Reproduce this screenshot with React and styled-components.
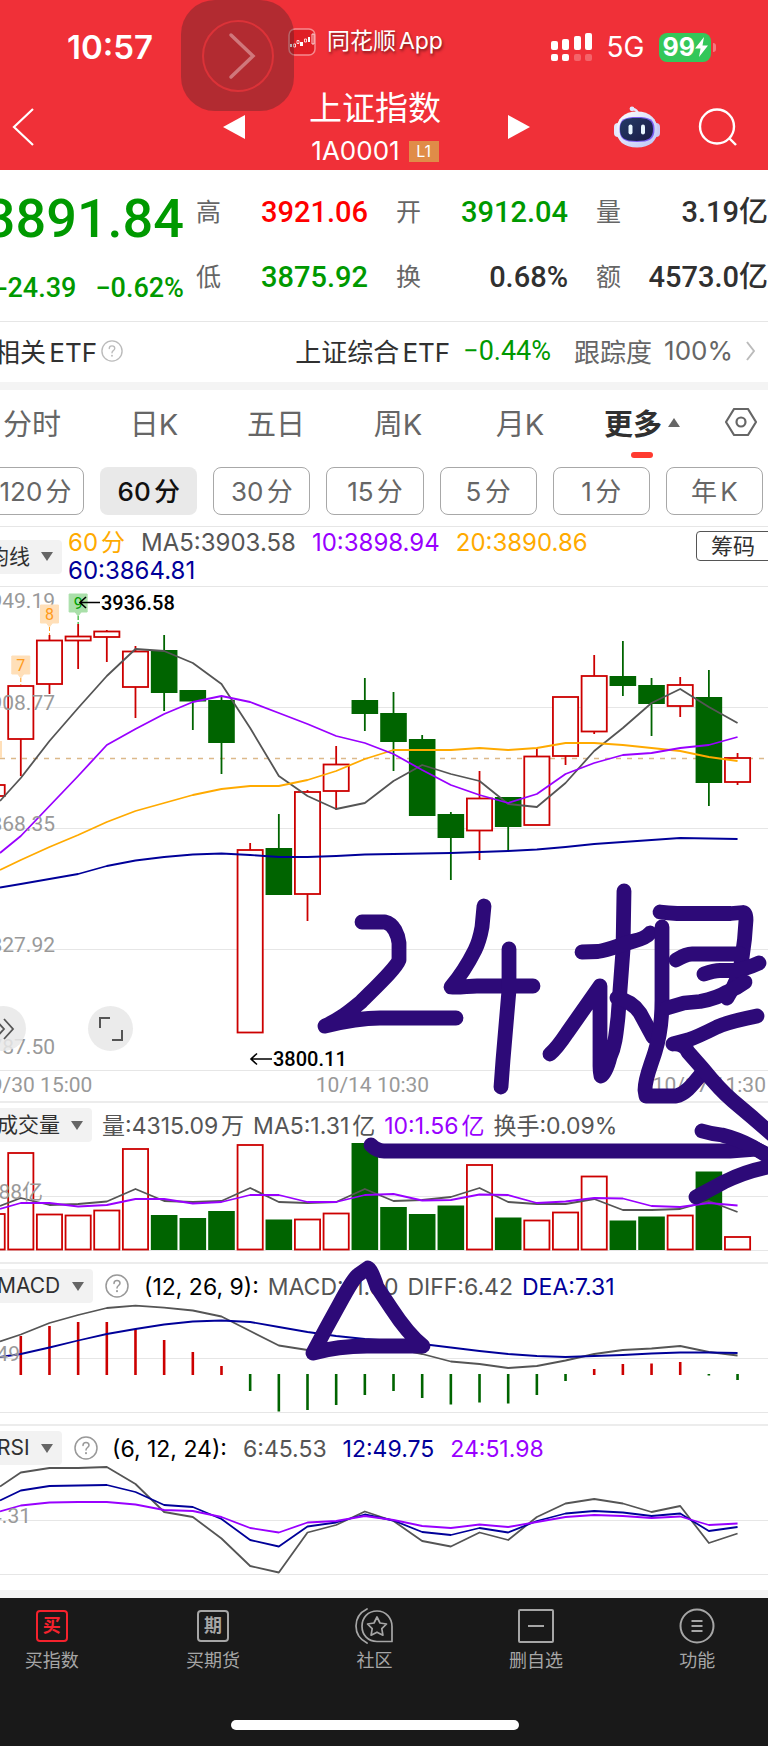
import React from "react";
import styled, { createGlobalStyle } from "styled-components";

const UI = `Inter, "Noto Sans CJK SC", sans-serif`;
const NUM = `Roboto, "Noto Sans CJK SC", sans-serif`;

const C = {
  red: "#f03038",
  up: "#cc0000",
  down: "#006400",
  fall: "#009900",
  rise: "#ff0000",
  ink: "#303030",
  mute: "#666666",
  axis: "#999999",
  line: "#e6e6e6",
  ma5: "#555555",
  ma10: "#9900ff",
  ma20: "#ffaa00",
  ma60: "#000099",
  pen: "#2d0a78",
};

const Global = createGlobalStyle`
  *, *::before, *::after { box-sizing: border-box; }
  body { margin: 0; background: #fff; font-family: ${UI}; color: ${C.ink}; text-autospace: normal; }
  button, select { font: inherit; color: inherit; background: none; border: 0; padding: 0; margin: 0; cursor: pointer; }
  button { display: inline-flex; align-items: center; justify-content: center; }
  a { color: inherit; text-decoration: none; }
  svg { display: block; flex: none; }
`;

const Page = styled.div`
  position: relative;
  overflow: hidden;
  white-space: nowrap;
`;

/* ---------- header ---------- */
const Header = styled.header`
  background: ${C.red};
  color: #fff;
`;
const StatusBar = styled.div`
  display: flex;
  align-items: center;
  height: 82px;
  padding: 12px 52px 0 67px;
`;
const Clock = styled.span`
  width: 221px;
  font-size: 33px;
  font-weight: 600;
`;
const SourceApp = styled.span`
  display: flex;
  align-items: center;
  gap: 11px;
  padding-bottom: 10px;
  font-size: 23px;
  line-height: 28px;
  text-shadow: 1px 2px 3px rgba(0, 0, 0, 0.5);
`;
const SourceName = styled.span`
  padding-bottom: 2px;
`;
const Signals = styled.span`
  display: flex;
  align-items: center;
  gap: 14px;
  margin-left: auto;
  font-size: 28px;
`;
const Battery = styled.span`
  display: flex;
  align-items: center;
  gap: 2px;
`;
const BatteryLevel = styled.span`
  display: flex;
  align-items: center;
  height: 29px;
  padding: 0 3px 0 4px;
  border-radius: 8px;
  background: #34c759;
  font-size: 25px;
  font-weight: 700;
`;
const BatteryTip = styled.i`
  width: 3px;
  height: 9px;
  border-radius: 0 3px 3px 0;
  background: rgba(255, 255, 255, 0.35);
`;
const TouchPad = styled.button`
  position: absolute;
  top: 0;
  left: 181px;
  width: 113px;
  height: 111px;
  border-radius: 34px;
  background: rgba(60, 35, 38, 0.34);
`;
const NavBar = styled.nav`
  display: grid;
  grid-template-columns: 1fr auto 1fr;
  align-items: center;
  height: 88px;
  padding-right: 18px;
`;
const NavLeft = styled.div`
  display: flex;
  align-items: center;
  justify-content: space-between;
  padding: 2px 64px 0 12px;
`;
const NavRight = styled.div`
  display: flex;
  align-items: center;
  padding: 2px 13px 0 67px;
  gap: 38px;
`;
const Robot = styled.button`
  margin-left: auto;
`;
const Title = styled.h1`
  margin: 0;
  font-size: 33px;
  line-height: 50px;
  font-weight: 400;
`;
const Code = styled.div`
  display: flex;
  align-items: center;
  justify-content: center;
  gap: 9px;
  font-size: 26px;
  line-height: 36px;
`;
const Level = styled.span`
  width: 30px;
  height: 21px;
  background: #e08c48;
  font-size: 16px;
  line-height: 21px;
  text-align: center;
`;

/* ---------- quote ---------- */
const Quote = styled.section`
  display: flex;
  height: 152px;
  border-bottom: 1px solid ${C.line};
  text-autospace: no-autospace;
`;
const PriceBlock = styled.div`
  width: 184px;
  display: flex;
  flex-direction: column;
  align-items: flex-end;
  padding-top: 16px;
  color: ${C.fall};
  font-family: ${NUM};
  font-weight: 500;
`;
const Price = styled.strong`
  font-size: 54px;
  line-height: 66px;
  font-weight: 500;
`;
const Change = styled.div`
  display: flex;
  gap: 19px;
  padding-top: 18px;
  font-size: 27px;
  line-height: 36px;
`;
const Stats = styled.dl`
  flex: 1;
  display: grid;
  grid-template-columns: repeat(3, 1fr);
  grid-auto-rows: 65px;
  column-gap: 28px;
  margin: 0;
  padding: 9px 0 0 12px;
`;
const Stat = styled.div`
  display: flex;
  align-items: center;
  justify-content: space-between;
  dt { padding-bottom: 3px; font-size: 25px; color: ${C.mute}; }
  dd {
    margin: 0;
    font-family: ${NUM};
    font-size: 29px;
    line-height: 36px;
    font-weight: 500;
    color: ${(p) => p.$color || C.ink};
  }
`;
const EtfRow = styled.div`
  display: flex;
  align-items: center;
  height: 60px;
  margin-left: -6px;
  padding: 0 13px 3px 0;
  font-size: 26px;
`;
const HelpButton = styled.button`
  margin-left: ${(p) => p.$gap || 0}px;
`;
const EtfLink = styled.a`
  display: flex;
  align-items: center;
  margin-left: auto;
  gap: 13px;
`;
const EtfChange = styled.span`
  color: ${C.fall};
  font-family: ${NUM};
  font-size: 27px;
`;
const Tracking = styled.span`
  display: flex;
  align-items: center;
  gap: 12px;
  padding-left: 10px;
  color: ${C.mute};
`;
const Band = styled.div`
  height: 8px;
  background: #f4f4f4;
`;

/* ---------- period selection ---------- */
const Tabs = styled.div`
  display: grid;
  grid-template-columns: repeat(6, 1fr) 76px;
  align-items: center;
  height: 68px;
  margin: 0 -11px 0 -29px;
  text-autospace: no-autospace;
`;
const Tab = styled.button`
  position: relative;
  gap: 6px;
  height: 68px;
  padding-bottom: 4px;
  font-size: 29px;
  font-weight: ${(p) => (p.$on ? 700 : 400)};
  color: ${(p) => (p.$on ? C.ink : C.mute)};
  &::after {
    content: "";
    display: ${(p) => (p.$on ? "block" : "none")};
    position: absolute;
    bottom: 0;
    left: 50%;
    width: 22px;
    height: 6px;
    margin-left: -11px;
    border-radius: 3px;
    background: #ff3b30;
  }
`;
const Periods = styled.div`
  display: grid;
  grid-template-columns: repeat(7, 1fr);
  gap: 16px;
  height: 68px;
  margin-left: -13px;
  padding: 9px 5px 11px 0;
`;
const Period = styled.button`
  padding-bottom: 4px;
  border: ${(p) => (p.$on ? 0 : 1)}px solid #a8a8a8;
  border-radius: 8px;
  background: ${(p) => (p.$on ? "#e9e9e9" : "#fff")};
  color: ${(p) => (p.$on ? "#111" : C.mute)};
  font-size: 26px;
  font-weight: ${(p) => (p.$on ? 500 : 400)};
`;
const Legend = styled.div`
  display: flex;
  align-items: center;
  height: 60px;
  border-top: 1px solid ${C.line};
`;
const LegendValues = styled.div`
  flex: 1;
  display: flex;
  flex-wrap: wrap;
  column-gap: 16px;
  padding-left: 6px;
  font-size: 24px;
  line-height: 28px;
`;
const Value = styled.span`
  color: ${(p) => p.$color};
`;
const ChipsButton = styled.button`
  align-self: flex-start;
  width: 78px;
  height: 30px;
  margin: 4px -6px 0 0;
  padding: 0 4px 4px 0;
  border: 1px solid #555;
  border-radius: 4px;
  font-size: 22px;
`;
const Pill = styled.label`
  display: inline-flex;
  align-items: center;
  gap: 11px;
  height: 34px;
  margin-left: ${(p) => p.$left}px;
  padding: 0 9px 0 5px;
  border-radius: 4px;
  background: #f2f2f2;
`;
const PillSelect = styled.select`
  appearance: none;
  outline: none;
  height: 34px;
  font-size: 21px;
`;

/* ---------- charts ---------- */
const Charts = styled.main`
  position: relative;
`;
const Plot = styled.svg`
  width: 100%;
  height: auto;
  font-family: ${NUM};
  font-size: 21px;
  text-autospace: no-autospace;
`;
const PlotBox = styled.div`
  position: relative;
`;
const RoundButton = styled.button`
  position: absolute;
  bottom: 19px;
  left: ${(p) => p.$left}px;
  width: 45px;
  height: 45px;
  border-radius: 50%;
  background: rgba(232, 232, 232, 0.85);
`;
const TimeAxis = styled.div`
  display: flex;
  justify-content: space-between;
  height: 31px;
  margin-left: -21px;
  padding-right: 2px;
  border-top: 1px solid ${C.line};
  font-family: ${NUM};
  font-size: 21px;
  line-height: 28px;
  color: ${C.axis};
`;
const PanelHead = styled.div`
  display: flex;
  align-items: center;
  height: 42px;
  padding-top: 4px;
  border-top: 2px solid #ececec;
  font-size: 23px;
  line-height: 28px;
`;
const PanelValues = styled.div`
  display: flex;
  gap: ${(p) => p.$gap}px;
  padding-left: ${(p) => p.$pad}px;
  padding-top: 2px;
`;
const Ink = styled.svg`
  position: absolute;
  top: 0;
  left: 0;
  width: 100%;
  height: auto;
  pointer-events: none;
`;

/* ---------- bottom bar ---------- */
const Footer = styled.footer`
  background: #191919;
  color: #a6a6a6;
  height: 148px;
`;
const TabBar = styled.nav`
  display: grid;
  grid-template-columns: repeat(5, 1fr);
  margin: 0 -10px 0 -29px;
  padding-top: 10px;
`;
const TabItem = styled.a`
  display: flex;
  flex-direction: column;
  align-items: center;
  gap: 3px;
  font-size: 18px;
  line-height: 28px;
`;
const GlyphBox = styled.span`
  display: flex;
  align-items: center;
  justify-content: center;
  width: 32px;
  height: 32px;
  margin: 2px 0;
  border: 2px solid;
  border-radius: 4px;
  font-size: 18px;
  font-weight: 700;
  color: ${(p) => p.$color || "inherit"};
`;
const HomeBar = styled.div`
  width: 288px;
  height: 10px;
  margin: 45px auto 0;
  border-radius: 5px;
  background: #fff;
  transform: translateX(-9px);
`;

/* ---------- data ---------- */
const X0 = 20.8;
const STEP = 28.67;
const cx = (i) => X0 + STEP * i;

// [index, direction, high, top, bottom, low]
const candles = [
  [-1, 1, 785, 785, 796, 796], [0, 1, 686, 686, 739, 776], [1, 1, 635, 640.5, 684, 694],
  [2, 1, 624, 636.5, 640.5, 669], [3, 1, 630, 631.5, 637, 662], [4, 1, 646, 651.5, 687, 718],
  [5, 0, 635, 650, 693, 711], [6, 0, 690, 690, 701.5, 730], [7, 0, 697, 700, 743, 774],
  [8, 1, 843, 850, 1032.5, 1032], [9, 0, 814, 848, 895, 895], [10, 1, 790, 792, 894, 921],
  [11, 1, 746, 764.5, 791, 810], [12, 0, 678, 700, 714, 731], [13, 0, 692, 713, 742, 771],
  [14, 0, 735, 739, 816, 816], [15, 0, 812, 814, 838, 880], [16, 1, 771, 798.5, 830.5, 860],
  [17, 0, 797, 797, 827, 852], [18, 1, 748, 756.5, 825, 825], [19, 1, 697, 697, 756, 765],
  [20, 1, 655, 676, 731.5, 734], [21, 0, 641, 676, 686, 696], [22, 0, 678, 685, 704, 736],
  [23, 1, 677, 685, 706, 717], [24, 0, 670, 697, 783, 806], [25, 1, 753, 758, 782, 785],
];
const ma5 = [801, 778, 741, 708, 676, 649, 651, 663, 684, 728, 776, 796, 809, 803, 781, 765, 774, 781, 804, 807, 783, 751, 728, 703, 689, 707, 723];
const ma10 = [853, 836, 806, 776, 745, 729, 714, 702, 696, 702, 713, 724, 736, 743, 754, 770, 785, 795, 803, 794, 774, 763, 755, 753, 748, 745, 737];
const ma20 = [870, 860, 847, 835, 822, 811, 803, 795, 789, 786, 786, 780, 771, 759, 750, 750, 750, 748, 750, 748, 743, 743, 745, 748, 751, 757, 761];
const ma60 = [887.5, 884, 879, 874, 866, 860.5, 857, 854.5, 853.5, 855, 857, 857, 856, 854.5, 854, 853.5, 853, 852, 851, 849.5, 847, 844, 842, 840, 838, 838.5, 839];
const volumes = [
  [-1, 1, 1214], [0, 1, 1153], [1, 1, 1214.5], [2, 1, 1215.5], [3, 1, 1210.5], [4, 1, 1149], [5, 0, 1215],
  [6, 0, 1218], [7, 0, 1211], [8, 1, 1145], [9, 0, 1219.5], [10, 1, 1219.5], [11, 1, 1213.5], [12, 0, 1143],
  [13, 0, 1207], [14, 0, 1214], [15, 0, 1205.5], [16, 1, 1165], [17, 0, 1217.5], [18, 1, 1220.5],
  [19, 1, 1212.5], [20, 1, 1176.5], [21, 0, 1220.5], [22, 0, 1216.5], [23, 1, 1215.5], [24, 0, 1171.5], [25, 1, 1237],
];
const vol5 = [1206, 1198, 1205, 1204, 1201.5, 1189, 1201, 1202, 1201, 1188, 1202, 1203, 1202, 1189, 1201, 1200, 1197, 1188, 1202, 1204, 1204, 1199, 1210, 1210, 1209, 1201, 1212];
const vol10 = [1209, 1203, 1203, 1206.5, 1205, 1199, 1199, 1203.5, 1202, 1195, 1195, 1202, 1202, 1195, 1194, 1200.5, 1200, 1194.5, 1195, 1203, 1201.5, 1198, 1198.5, 1206, 1207, 1203, 1205.5];
const macdBars = [1336, 1326, 1322, 1322, 1329, 1340, 1352, 1366, 1391, 1411.5, 1410, 1405, 1395, 1391, 1398, 1404.5, 1402.5, 1403.5, 1395, 1381, 1369, 1364, 1363.5, 1362, 1375.5, 1380];
const diff = [1341.5, 1334.5, 1323, 1315, 1308, 1305.7, 1307.7, 1310.5, 1316.5, 1331, 1345.5, 1350, 1349, 1347, 1348, 1354, 1361.5, 1364, 1368, 1366, 1360.5, 1354, 1350, 1348.5, 1346, 1352, 1355.5];
const dea = [1357, 1354, 1347.5, 1340.5, 1334, 1329, 1324.5, 1321.5, 1320.5, 1322, 1327, 1332, 1336, 1339, 1341, 1344, 1347.5, 1351, 1354, 1356, 1357, 1356, 1355, 1353.5, 1352.5, 1352.5, 1353];
const rsi6 = [1486.5, 1472.5, 1468, 1468, 1467, 1484, 1512, 1517, 1538.5, 1566, 1572.5, 1532.5, 1525, 1511.5, 1521, 1541, 1546.5, 1532.5, 1540, 1517, 1503.5, 1499, 1503.5, 1512, 1506, 1543, 1533.5];
const rsi12 = [1500.5, 1490.5, 1486, 1485.5, 1485, 1492, 1505, 1507, 1519, 1540, 1546.5, 1526.5, 1522.5, 1514.5, 1520.5, 1532, 1535, 1528, 1532.5, 1521, 1513.5, 1511, 1512.5, 1516, 1513.5, 1531, 1527];
const rsi24 = [1511.5, 1505.5, 1502.5, 1502, 1502, 1504.5, 1510, 1511, 1517, 1528, 1532.5, 1522.5, 1521, 1516, 1520, 1526, 1528, 1524.5, 1527, 1522, 1517, 1515, 1516, 1518, 1516.5, 1525, 1523.5];

/* The first value of each series is where the line enters at the left edge. */
function Line({ values, color }) {
  const points = values.map((y, k) => `${k === 0 ? 0 : cx(k - 1)},${y}`).join(" ");
  return <polyline points={points} fill="none" stroke={color} strokeWidth="1.8" strokeLinejoin="round" />;
}
function Bar({ i, up, top, bottom }) {
  return up ? (
    <rect x={cx(i) - 12.6} y={top} width="25.2" height={bottom - top} fill="#fff" stroke={C.up} strokeWidth="1.8" />
  ) : (
    <rect x={cx(i) - 13.3} y={top} width="26.6" height={bottom - top} fill={C.down} />
  );
}
function GridLine({ y }) {
  return <line x1="0" x2="768" y1={y} y2={y} stroke={C.line} strokeWidth="1" />;
}
function AxisText({ x, y, children }) {
  return <text x={x} y={y} textAnchor="end" fill={C.axis}>{children}</text>;
}
function Tag({ i, y, n, green, tail }) {
  const x = cx(i);
  const fill = green ? "#a9dfa9" : "#ffdfb8";
  const ink = green ? "#00a000" : "#ff9a1a";
  return (
    <g>
      <path d={`M${x - 9} ${y}h18v18h-6l-3 4-3-4h-6z`} fill={fill} stroke={fill} strokeLinejoin="round" />
      <line x1={x} x2={x} y1={y + 22} y2={tail} stroke={ink} strokeDasharray="4 2" />
      <text x={x} y={y + 15} textAnchor="middle" fontSize="16" fill={ink}>{n}</text>
    </g>
  );
}

/* ---------- icons ---------- */
const Caret = ({ up }) => (
  <svg width="12" height="9" viewBox="0 0 12 9" fill="#666"><path d={up ? "M6 0l6 9H0z" : "M0 0h12L6 9z"} /></svg>
);
const Help = ({ size = 24, color = "#999" }) => (
  <svg width={size} height={size} viewBox="0 0 24 24" fill="none" stroke={color} strokeWidth="1.5" strokeLinecap="round">
    <circle cx="12" cy="12" r="11" />
    <path d="M9 9.4c0-1.9 1.300-3 3-3s3 1.100 3 2.800c0 2.300-3 2.400-3 4.800" />
    <path d="M12 17v.3" strokeWidth="2" />
  </svg>
);
const RobotIcon = () => (
  <svg width="46" height="42" viewBox="0 0 46 42">
    <defs>
      <linearGradient id="shell" x1="0" y1="0" x2="1" y2="1"><stop offset="0" stopColor="#fff" /><stop offset="1" stopColor="#b9c4f5" /></linearGradient>
      <linearGradient id="visor" x1="0" y1="0" x2="1" y2="1"><stop offset="0" stopColor="#243a66" /><stop offset="1" stopColor="#1b1c45" /></linearGradient>
    </defs>
    <path d="M24 8c-.5-3-2-4.500-5-5" fill="none" stroke="#e6e9ff" strokeWidth="2.400" />
    <circle cx="18" cy="2.800" r="2.400" fill="#dfe6ff" />
    <rect x="0" y="17" width="8" height="14" rx="4" fill="#e3e7fb" />
    <rect x="38" y="17" width="8" height="14" rx="4" fill="#c9c9f4" />
    <path d="M23 5.500c13 0 20.500 7.500 20.500 18.500S36 41.500 23 41.500 2.500 35 2.500 24 10 5.500 23 5.500z" fill="url(#shell)" />
    <path d="M23 11c12 0 17.500 2 17.500 12S36 36 23 36 5.500 33 5.500 23 11 11 23 11z" fill="#7a5cf0" />
    <path d="M22.500 12c11.500 0 16.500 2 16.500 11s-4.500 12-16.500 12S6 32 6 23s5-11 16.500-11z" fill="url(#visor)" />
    <rect x="14.500" y="18.500" width="4" height="10" rx="2" fill="#e8f6ff" />
    <rect x="27" y="18.500" width="4" height="10" rx="2" fill="#e8f6ff" />
  </svg>
);

function Picker({ name, left = -8 }) {
  return (
    <Pill $left={left}>
      <PillSelect aria-label={name} defaultValue={name}><option>{name}</option></PillSelect>
      <Caret />
    </Pill>
  );
}

const stats = [
  ["高", "3921.06", C.rise], ["开", "3912.04", C.fall], ["量", "3.19亿"],
  ["低", "3875.92", C.fall], ["换", "0.68%"], ["额", "4573.0亿"],
];

export default function App() {
  return (
    <Page>
      <Global />
      <Header>
        <StatusBar>
          <Clock>10:57</Clock>
          <SourceApp>
            <svg width="28" height="28" viewBox="0 0 28 28">
              <rect x="1" y="1" width="26" height="26" rx="6" fill="#e01f26" stroke="#f58a8e" strokeWidth="1.500" />
              <g fill="#fff">
                <path d="M2 16h2v3H2zM12 14h3v4h-3zM20 9h2v5h-2z" />
              </g>
              <path d="M5.500 16h2v3h-2zM9 12.500h2v3H9zM16.500 11h2v3h-2zM24 6h2v10h-2z" fill="none" stroke="#fff" strokeWidth=".8" />
            </svg>
            <SourceName>同花顺App</SourceName>
          </SourceApp>
          <Signals>
            <svg width="42" height="28" viewBox="0 0 42 28" fill="#fff">
              <rect x="0" y="8" width="7" height="9" rx="2" />
              <rect x="11" y="6" width="7" height="11" rx="2" />
              <rect x="23" y="3" width="7" height="14" rx="2" />
              <rect x="34" y="0" width="7" height="17" rx="2" />
              <rect x="0" y="21" width="7" height="7" rx="2" />
              <rect x="11" y="21" width="7" height="7" rx="2" />
              <rect x="23" y="21" width="7" height="7" rx="2" opacity=".25" />
              <rect x="34" y="21" width="7" height="7" rx="2" opacity=".25" />
            </svg>
            5G
            <Battery>
              <BatteryLevel>
                99
                <svg width="13" height="20" viewBox="0 0 13 20" fill="#fff"><path d="M9 0L0 11.500h5.500L4 20l9-11.500H7.500z" /></svg>
              </BatteryLevel>
              <BatteryTip />
            </Battery>
          </Signals>
        </StatusBar>
        <NavBar>
          <NavLeft>
            <button aria-label="返回">
              <svg width="22" height="38" viewBox="0 0 22 38" fill="none" stroke="#fff" strokeWidth="2.200"><path d="M21 1L2 19l19 18" /></svg>
            </button>
            <button aria-label="上一个">
              <svg width="22" height="24" viewBox="0 0 22 24" fill="#fff"><path d="M0 12L22 0v24z" /></svg>
            </button>
          </NavLeft>
          <div>
            <Title>上证指数</Title>
            <Code>1A0001 <Level>L1</Level></Code>
          </div>
          <NavRight>
            <button aria-label="下一个">
              <svg width="22" height="24" viewBox="0 0 22 24" fill="#fff"><path d="M22 12L0 0v24z" /></svg>
            </button>
            <Robot aria-label="助手"><RobotIcon /></Robot>
            <button aria-label="搜索">
              <svg width="39" height="38" viewBox="0 0 39 38" fill="none" stroke="#fff" strokeWidth="2.400"><circle cx="19" cy="18.500" r="17" /><path d="M31 30l7 7" /></svg>
            </button>
          </NavRight>
        </NavBar>
      </Header>
      <TouchPad aria-label="悬浮按钮">
        <svg width="72" height="74" viewBox="0 0 72 74" fill="none">
          <circle cx="36" cy="37" r="35" stroke="#dc3238" strokeWidth="2" />
          <path d="M29 16l22 21-22 21" stroke="#d0777b" strokeWidth="3.500" strokeLinecap="round" />
        </svg>
      </TouchPad>

      <Quote>
        <PriceBlock>
          <Price>3891.84</Price>
          <Change><span>-24.39</span><span>−0.62%</span></Change>
        </PriceBlock>
        <Stats>
          {stats.map(([k, v, color]) => (
            <Stat key={k} $color={color}><dt>{k}</dt><dd>{v}</dd></Stat>
          ))}
        </Stats>
      </Quote>

      <EtfRow>
        相关ETF
        <HelpButton $gap={4} aria-label="说明"><Help size={22} color="#bbb" /></HelpButton>
        <EtfLink href="#etf">
          <span>上证综合ETF</span>
          <EtfChange>−0.44%</EtfChange>
          <Tracking><span>跟踪度</span><span>100%</span></Tracking>
          <svg width="9" height="20" viewBox="0 0 9 20" fill="none" stroke="#bbb" strokeWidth="2"><path d="M1 1l7 9-7 9" /></svg>
        </EtfLink>
      </EtfRow>
      <Band />

      <Tabs>
        {["分时", "日K", "五日", "周K", "月K"].map((t) => <Tab key={t}>{t}</Tab>)}
        <Tab $on>更多 <Caret up /></Tab>
        <Tab aria-label="设置">
          <svg width="32" height="28" viewBox="0 0 32 28" fill="none" stroke="#666" strokeWidth="2.200" strokeLinejoin="round">
            <path d="M9 1h14l8 13-8 13H9L1 14z" /><circle cx="16" cy="14" r="4.500" />
          </svg>
        </Tab>
      </Tabs>
      <Periods>
        {["120分", "60分", "30分", "15分", "5分", "1分", "年K"].map((t) => (
          <Period key={t} $on={t === "60分"}>{t}</Period>
        ))}
      </Periods>

      <Legend>
        <Picker name="均线" left={-17} />
        <LegendValues>
          <Value $color={C.ma20}>60分</Value>
          <Value $color={C.ma5}>MA5:3903.58</Value>
          <Value $color={C.ma10}>10:3898.94</Value>
          <Value $color={C.ma20}>20:3890.86</Value>
          <Value $color={C.ma60}>60:3864.81</Value>
        </LegendValues>
        <ChipsButton>筹码</ChipsButton>
      </Legend>

      <Charts>
        <PlotBox>
          <Plot viewBox="0 586 768 484">
            {[586.5, 707.5, 828.5, 949.5].map((y) => <GridLine key={y} y={y} />)}
            <path d="M0 758.500H768" stroke="#dcb98a" strokeWidth="1.300" strokeDasharray="5 6" />
            {candles.map(([i, up, high, top, bottom, low]) => (
              <g key={i}>
                <line x1={cx(i)} x2={cx(i)} y1={high} y2={low} stroke={up ? C.up : C.down} strokeWidth="1.800" />
                <Bar i={i} up={up} top={top} bottom={bottom} />
              </g>
            ))}
            <Line values={ma60} color={C.ma60} />
            <Line values={ma5} color={C.ma5} />
            <Line values={ma20} color={C.ma20} />
            <Line values={ma10} color={C.ma10} />
            <rect x="0" y="741" width="2" height="17" fill="#ffdfb8" />
            <AxisText x={55} y={608}>3949.19</AxisText>
            <AxisText x={55} y={710}>3908.77</AxisText>
            <AxisText x={55} y={831}>3868.35</AxisText>
            <AxisText x={55} y={952}>3827.92</AxisText>
            <AxisText x={55} y={1054}>3787.50</AxisText>
            <Tag i={0} y={656} n="7" tail={685} />
            <Tag i={1} y={605} n="8" tail={635} />
            <Tag i={2} y={594} n="9" green tail={624} />
            <g fill="none" stroke="#000" strokeWidth="1.600">
              <path d="M100 602.500H80M86 597l-6 5.500 6 5.500" />
              <path d="M272 1059H251M257 1053.500l-6 5.500 6 5.500" />
            </g>
            <g fill="#000" fontSize="20" fontWeight="500">
              <text x="101" y="610">3936.58</text>
              <text x="273" y="1066">3800.11</text>
            </g>
          </Plot>
          <RoundButton $left={-19} aria-label="展开">
            <svg width="22" height="22" viewBox="0 0 22 22" fill="none" stroke="#555" strokeWidth="1.800"><path d="M2 1l9 10-9 10M11 1l9 10-9 10" /></svg>
          </RoundButton>
          <RoundButton $left={88} aria-label="全屏">
            <svg width="24" height="24" viewBox="0 0 24 24" fill="none" stroke="#555" strokeWidth="2"><path d="M1 11V1h10M23 13v10H13" /></svg>
          </RoundButton>
        </PlotBox>
        <TimeAxis><span>09/30 15:00</span><span>10/14 10:30</span><span>10/17 11:30</span></TimeAxis>

        <PanelHead>
          <Picker name="成交量" />
          <PanelValues $pad={10} $gap={9}>
            <Value $color={C.ma5}>量:4315.09万</Value>
            <Value $color={C.ma5}>MA5:1.31亿</Value>
            <Value $color={C.ma10}>10:1.56亿</Value>
            <Value $color={C.ma5}>换手:0.09%</Value>
          </PanelValues>
        </PanelHead>
        <Plot viewBox="0 1143 768 119">
          <GridLine y={1196.5} />
          <GridLine y={1250.5} />
          {volumes.map(([i, up, top]) => <Bar key={i} i={i} up={up} top={top} bottom={up ? 1249.500 : 1250} />)}
          <Line values={vol5} color={C.ma5} />
          <Line values={vol10} color={C.ma10} />
          <AxisText x={43} y={1199}>1.88亿</AxisText>
        </Plot>

        <PanelHead>
          <Picker name="MACD" />
          <HelpButton $gap={12} aria-label="MACD说明"><Help /></HelpButton>
          <PanelValues $pad={15} $gap={9}>
            <Value $color="#000">(12, 26, 9):</Value>
            <Value $color={C.ma5}>MACD:-1.80</Value>
            <Value $color={C.ma5}>DIFF:6.42</Value>
            <Value $color={C.ma60}>DEA:7.31</Value>
          </PanelValues>
        </PanelHead>
        <Plot viewBox="0 1304 768 120">
          <GridLine y={1358.5} />
          <GridLine y={1412.5} />
          {macdBars.map((y, i) => (
            <line key={i} x1={cx(i)} x2={cx(i)} y1={y < 1374 ? 1375 : 1374} y2={y} stroke={y < 1374 ? C.up : C.down} strokeWidth="2.600" />
          ))}
          <Line values={diff} color={C.ma5} />
          <Line values={dea} color={C.ma60} />
          <AxisText x={20} y={1361}>11.49</AxisText>
        </Plot>

        <PanelHead>
          <Picker name="RSI" />
          <HelpButton $gap={12} aria-label="RSI说明"><Help /></HelpButton>
          <PanelValues $pad={14} $gap={16}>
            <Value $color="#000">(6, 12, 24):</Value>
            <Value $color={C.ma5}>6:45.53</Value>
            <Value $color={C.ma60}>12:49.75</Value>
            <Value $color={C.ma10}>24:51.98</Value>
          </PanelValues>
        </PanelHead>
        <Plot viewBox="0 1466 768 124">
          <GridLine y={1520.5} />
          <GridLine y={1574.5} />
          <Line values={rsi6} color={C.ma5} />
          <Line values={rsi12} color={C.ma60} />
          <Line values={rsi24} color={C.ma10} />
          <AxisText x={31} y={1523}>54.31</AxisText>
        </Plot>

        <Ink viewBox="0 586 768 1004" fill="none" stroke={C.pen} strokeWidth="14.800" strokeLinecap="round" strokeLinejoin="round">
          <path d="M362 922H385C394 924 398 935 399 943V960C396 968 380 983 361 1002C350 1011 342 1018 325 1026C345 1021 365 1018 380 1018H456" />
          <path d="M484 906L482 927C480 938 477 946 475 950C468 964 462 974 451 987C459 988 468 986 477 986H533" />
          <path d="M509 949V990L503 1060L501 1087" />
          <path d="M624 891L623 950L618 1017C616 1035 615 1046 610 1057Q606 1073 601 1076Q600 1072 600 1066V986L567 1033Q557 1048 550 1054" />
          <path d="M582 952L598 951.500C610 950 622 944 634 941Q646 938 650 933" />
          <path d="M617 998Q632 1001 640 1013L653 1037" />
          <path d="M662 927V1000Q662 1030 655 1052C650 1068 645 1078 645 1090L646 1096H676C686 1094 693 1084 703 1072" />
          <path d="M660 912Q668 913 677 913.500H731L743 912.500Q746 913 746 920Q745 940 742 958Q740 978 727 998" />
          <path d="M676 960Q686 954 692 954H740" />
          <path d="M704 974Q714 970.500 720 970.500H735Q746 969 759 963" />
          <path d="M667 1008L684 1003L700 1001.500Q718 998 727 992Q737 988 745 982" />
          <path d="M757 1016C735 1021 728 1022 717 1027Q697 1037 688 1040L673 1044Q684 1043 688 1052L703 1069Q720 1090 733 1101L752 1117L776 1138" />
          <path d="M371 1145Q377 1151 384 1151H730L756 1149L774 1158" />
          <path d="M702 1131Q712 1134 722 1135Q738 1139 753 1147L774 1160" />
          <path d="M696 1197L724 1182Q748 1170 774 1166" />
          <path d="M313 1353Q326 1328 340 1303Q354 1277 358 1275L368 1268Q371 1269 377 1287L391 1308Q408 1334 423 1346Q395 1346 367 1346Q338 1346 313 1353" />
        </Ink>
      </Charts>
      <Band />

      <Footer>
        <TabBar>
          <TabItem href="#index"><GlyphBox $color="#f5222d">买</GlyphBox>买指数</TabItem>
          <TabItem href="#futures"><GlyphBox>期</GlyphBox>买期货</TabItem>
          <TabItem href="#community">
            <svg width="38" height="36" viewBox="0 0 38 36" fill="none" stroke="#a6a6a6" strokeWidth="1.700" strokeLinejoin="round">
              <path d="M22 3c9 0 15 7 15 15.500V33.500H22C13 33.500 7 27 7 18.300S13 3 22 3z" />
              <path d="M12 1C4 5 1 11 1 18s3 13 11 17" strokeLinecap="round" />
              <path d="M22 9l3 6 6.500 1-4.700 4.700 1.100 6.500L22 24.200l-5.900 3 1.100-6.500L12.500 16l6.500-1z" />
            </svg>
            社区
          </TabItem>
          <TabItem href="#remove">
            <svg width="36" height="36" viewBox="0 0 36 36" fill="none" stroke="#a6a6a6" strokeWidth="2"><rect x="1" y="2" width="34" height="32" rx="1" /><path d="M10 18h16" /></svg>
            删自选
          </TabItem>
          <TabItem href="#functions">
            <svg width="36" height="36" viewBox="0 0 36 36" fill="none" stroke="#a6a6a6" strokeWidth="2"><circle cx="18" cy="18" r="16.500" /><path d="M12.500 13h11M12.500 18h11M12.500 23h11" /></svg>
            功能
          </TabItem>
        </TabBar>
        <HomeBar />
      </Footer>
    </Page>
  );
}
